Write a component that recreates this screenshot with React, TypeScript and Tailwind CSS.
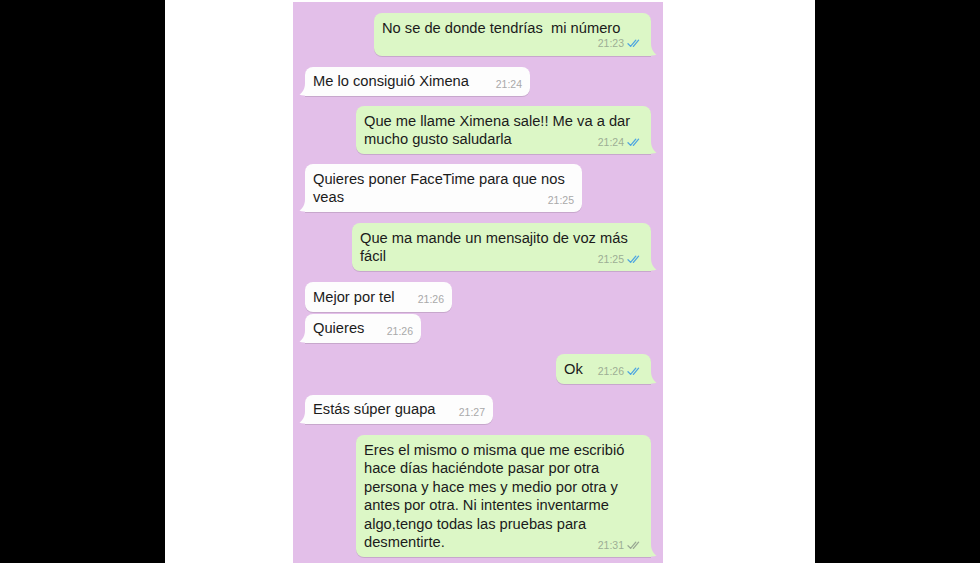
import React from "react"

type Msg = {
    out: boolean
    w: string
    mt: string
    lines: string[]
    time: string
    below?: boolean
    tail?: boolean
    read?: boolean
}

const messages: Msg[] = [
    { out: true, w: "w-[277px]", mt: "mt-[11px]", lines: ["No se de donde tendrías  mi número"], time: "21:23", below: true },
    { out: false, w: "w-[225px]", mt: "mt-[11px]", lines: ["Me lo consiguió Ximena"], time: "21:24" },
    { out: true, w: "w-[295px]", mt: "mt-[10px]", lines: ["Que me llame Ximena sale!! Me va a dar", "mucho gusto saludarla"], time: "21:24" },
    { out: false, w: "w-[277px]", mt: "mt-[10px]", lines: ["Quieres poner FaceTime para que nos", "veas"], time: "21:25" },
    { out: true, w: "w-[299px]", mt: "mt-[11px]", lines: ["Que ma mande un mensajito de voz más", "fácil"], time: "21:25" },
    { out: false, w: "w-[147px]", mt: "mt-[11px]", lines: ["Mejor por tel"], time: "21:26", tail: false },
    { out: false, w: "w-[116px]", mt: "mt-[2px]", lines: ["Quieres"], time: "21:26" },
    { out: true, w: "w-[95px]", mt: "mt-[11px]", lines: ["Ok"], time: "21:26" },
    { out: false, w: "w-[188px]", mt: "mt-[11px]", lines: ["Estás súper guapa"], time: "21:27" },
    {
        out: true,
        w: "w-[295px]",
        mt: "mt-[11px]",
        lines: [
            "Eres el mismo o misma que me escribió",
            "hace días haciéndote pasar por otra",
            "persona y hace mes y medio por otra y",
            "antes por otra. Ni intentes inventarme",
            "algo,tengo todas las pruebas para",
            "desmentirte.",
        ],
        time: "21:31",
        read: false,
    },
]

const Ticks = ({ read }: { read: boolean }) => (
    <svg width="14" height="9" viewBox="0 0 14 9" fill="none" className="ml-[3px]">
        <path d="M1 4.8 L3.6 7.4 L8.8 1.2" stroke={read ? "#4fa6e0" : "#9aa894"} strokeWidth="1.3" strokeLinecap="round" strokeLinejoin="round" />
        <path d="M6.4 7.4 L11.6 1.2" stroke={read ? "#4fa6e0" : "#9aa894"} strokeWidth="1.3" strokeLinecap="round" strokeLinejoin="round" />
    </svg>
)

const Time = ({ m }: { m: Msg }) => (
    <span className={`flex items-center text-[10.5px] leading-[13px] ${m.out ? "text-[#9cae95]" : "text-[#a9a9a9]"}`}>
        {m.time}
        {m.out && <Ticks read={m.read !== false} />}
    </span>
)

const Tail = ({ out }: { out: boolean }) =>
    out ? (
        <svg width="14" height="16" viewBox="0 0 14 16" className="absolute right-[-6px] bottom-0">
            <path d="M8 0 H0 V16 H5 C7.5 16 11 15.6 13.5 14.6 C10.5 12.5 8 9 8 3 Z" fill="#dcf7c6" />
        </svg>
    ) : (
        <svg width="14" height="16" viewBox="0 0 14 16" className="absolute left-[-6px] bottom-0">
            <path d="M6 0 H14 V16 H9 C6.5 16 3 15.6 0.5 14.6 C3.5 12.5 6 9 6 3 Z" fill="#fdfdfd" />
        </svg>
    )

const Bubble = ({ m }: { m: Msg }) => {
    const hasTail = m.tail !== false
    return (
        <div
            className={`relative ${m.w} ${m.mt} ${m.out ? "self-end mr-[12px] bg-[#dcf7c6] pr-[10px]" : "self-start ml-[12px] bg-[#fdfdfd] pr-[8px]"} pl-[8px] pt-[5.5px] pb-[5.5px] rounded-[8px] ${hasTail ? (m.out ? "rounded-br-none" : "rounded-bl-none") : ""} shadow-[0_1px_0.5px_rgba(0,0,0,0.12)]`}
        >
            {m.below ? (
                <>
                    <p className="whitespace-pre text-[14.7px] leading-[18.5px] text-[#1b1b1b]">{m.lines[0]}</p>
                    <div className="flex justify-end">
                        <Time m={m} />
                    </div>
                </>
            ) : (
                <div className="grid">
                    <p className="[grid-area:1/1] whitespace-pre text-[14.7px] leading-[18.5px] text-[#1b1b1b]">
                        {m.lines.map((l, i) => (
                            <React.Fragment key={i}>
                                {i > 0 && <br />}
                                {l}
                            </React.Fragment>
                        ))}
                    </p>
                    <div className="[grid-area:1/1] self-end justify-self-end">
                        <Time m={m} />
                    </div>
                </div>
            )}
            {hasTail && <Tail out={m.out} />}
        </div>
    )
}

const App = () => {
    return (
        <div className="flex w-[980px] h-[563px] overflow-hidden font-['Liberation_Sans',Arial,sans-serif]">
            <div className="w-[165px] bg-black" />
            <div className="w-[650px] bg-white pl-[128px] pt-[2px]">
                <section className="flex flex-col w-[370px] h-full bg-[#e3bfe9]">
                    {messages.map((m, i) => (
                        <Bubble key={i} m={m} />
                    ))}
                </section>
            </div>
            <div className="flex-1 bg-black" />
        </div>
    )
}

export default App
